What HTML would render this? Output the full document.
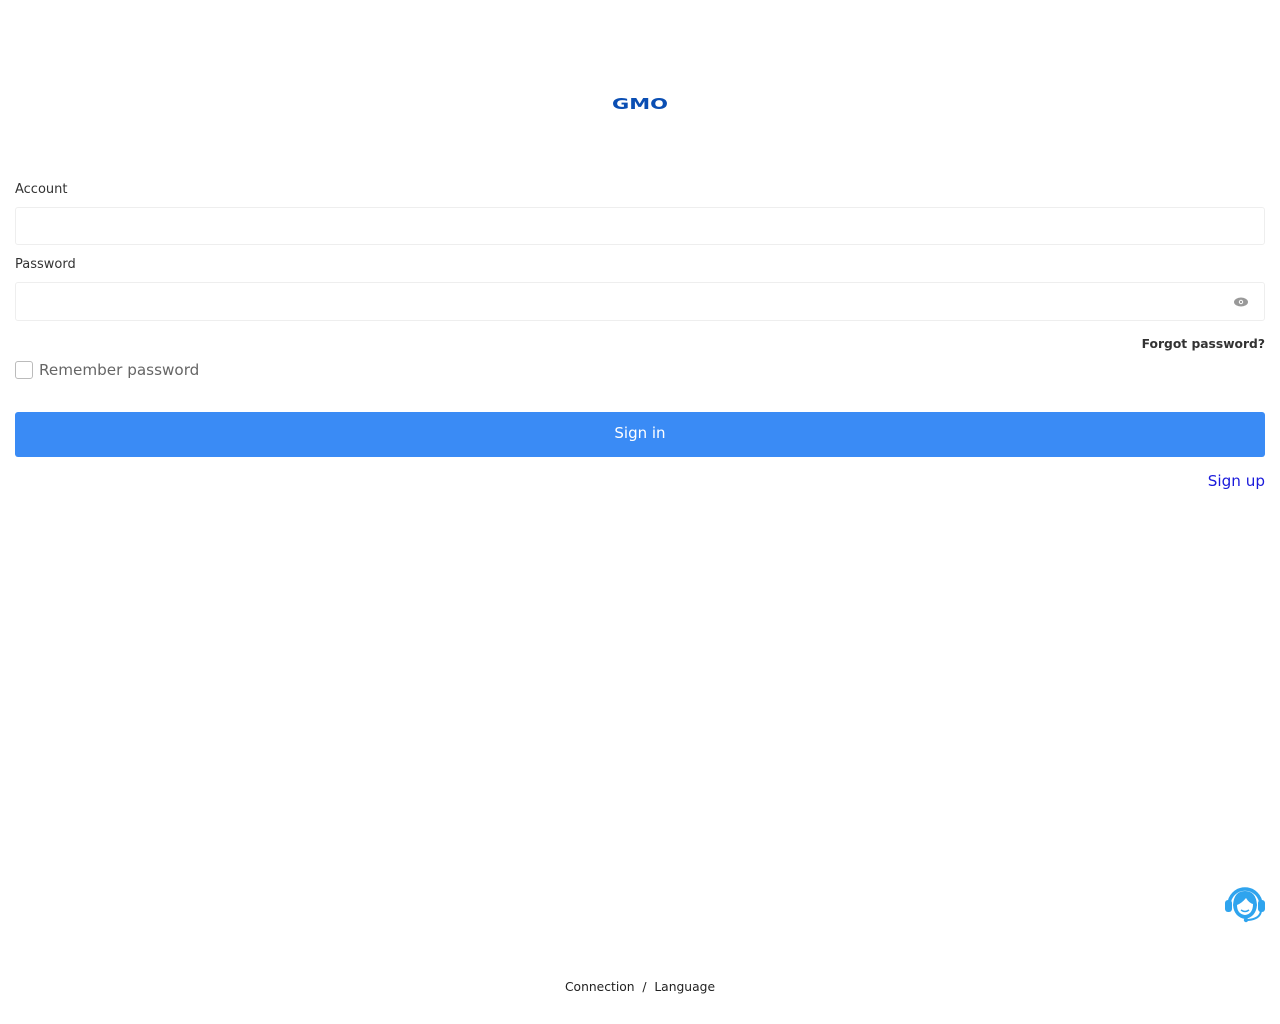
<!DOCTYPE html>
<html><head><meta charset="utf-8"><style>
*{box-sizing:border-box;margin:0;padding:0}
body{width:1280px;height:1024px;background:#fff;font-family:"DejaVu Sans",sans-serif;position:relative;overflow:hidden}
.logo{position:absolute;left:612px;top:95px;font-family:"DejaVu Sans",sans-serif;font-weight:bold;font-size:15px;color:#0a4eb3;transform:scaleX(1.4);transform-origin:left}
.lbl{position:absolute;left:15px;font-size:13px;color:#333}
.inp{position:absolute;left:15px;width:1250px;height:38px;border:1px solid #eee;border-radius:3px}
</style></head><body>
<div class="logo">GMO</div>
<div class="lbl" style="top:182px">Account</div>
<div class="inp" style="top:207px"></div>
<div class="lbl" style="top:257px">Password</div>
<div class="inp" style="top:282px;height:39px"></div>
<svg style="position:absolute;left:1234px;top:297px" width="14" height="10" viewBox="0 0 14 10"><ellipse cx="7" cy="5" rx="7" ry="4.5" fill="#999"/><circle cx="7" cy="5" r="2.2" fill="#fff"/><circle cx="7" cy="5" r="1.2" fill="#999"/></svg>
<div style="position:absolute;right:15px;top:337px;font-size:12.3px;font-weight:bold;color:#333">Forgot password?</div>
<div style="position:absolute;left:15px;top:361px;width:18px;height:18px;border:1px solid #bbb;border-radius:3px"></div>
<div style="position:absolute;left:39px;top:361px;font-size:15.2px;color:#666">Remember password</div>
<div style="position:absolute;left:15px;top:412px;width:1250px;height:45px;background:#3a8bf5;border-radius:3px;color:#fff;font-size:15px;text-align:center;line-height:43px">Sign in</div>
<div style="position:absolute;right:15px;top:472px;font-size:15.2px;color:#1a1adb">Sign up</div>
<svg style="position:absolute;left:1224px;top:883px" width="42" height="42" viewBox="0 0 42 42">
<path d="M5 22 A16 16 0 0 1 37 22" fill="none" stroke="#2fa4ee" stroke-width="3.5"/>
<rect x="1" y="17" width="7" height="12" rx="3" fill="#2fa4ee"/>
<rect x="34" y="17" width="7" height="12" rx="3" fill="#2fa4ee"/>
<path d="M9 22 Q10 8 21 8 Q32 8 33 22 Q32 34 21 36 Q10 34 9 22Z" fill="#2fa4ee"/>
<path d="M13 22 Q18 20 22 15 Q25 20 29 21 Q29 31 21 32 Q13 31 13 22Z" fill="#fff"/>
<path d="M17 27 Q21 30 25 27" fill="none" stroke="#2fa4ee" stroke-width="1.5"/>
<path d="M37 28 Q36 36 24 37" fill="none" stroke="#2fa4ee" stroke-width="2"/>
<circle cx="22" cy="37" r="2.2" fill="#2fa4ee"/>
</svg>
<div style="position:absolute;left:0;width:1280px;top:980px;text-align:center;font-size:12.3px;color:#222">Connection&nbsp;&nbsp;/&nbsp;&nbsp;Language</div>
</body></html>
